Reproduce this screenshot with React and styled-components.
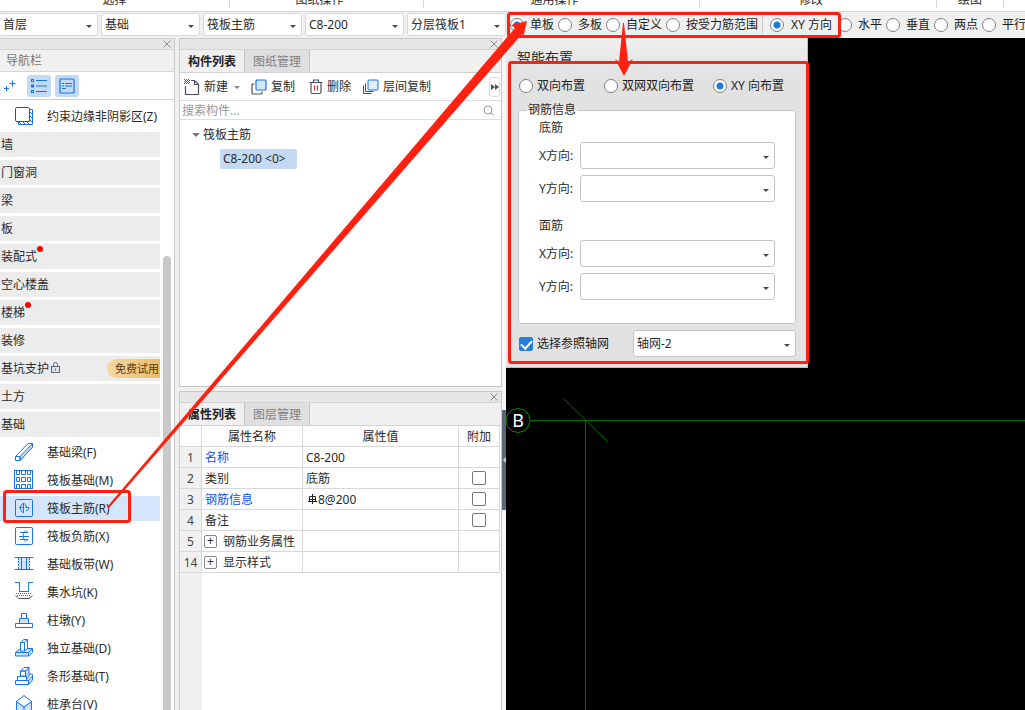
import React from "react";
import styled, { createGlobalStyle } from "styled-components";

const BLUE = "#1a73e8";
const DARK = "#4a5060";

const ribbonGroups = [
  { name: "选择", width: 230, shift: 0 },
  { name: "图纸操作", width: 194, shift: 14 },
  { name: "通用操作", width: 276, shift: 14 },
  { name: "修改", width: 237, shift: 14 },
  { name: "绘图", width: 67, shift: 0 },
];

const combos = ["首层", "基础", "筏板主筋", "C8-200", "分层筏板1"];

const navGroups = [
  { name: "墙" },
  { name: "门窗洞" },
  { name: "梁" },
  { name: "板" },
  { name: "装配式", dot: true },
  { name: "空心楼盖" },
  { name: "楼梯", dot: true },
  { name: "装修" },
  { name: "基坑支护", locked: true },
  { name: "土方" },
  { name: "基础" },
];

const navItems = [
  { name: "基础梁(F)", icon: "beam" },
  { name: "筏板基础(M)", icon: "raft" },
  { name: "筏板主筋(R)", icon: "mainBar", active: true },
  { name: "筏板负筋(X)", icon: "negBar" },
  { name: "基础板带(W)", icon: "strip" },
  { name: "集水坑(K)", icon: "pit" },
  { name: "柱墩(Y)", icon: "pier" },
  { name: "独立基础(D)", icon: "isolated" },
  { name: "条形基础(T)", icon: "linear" },
  { name: "桩承台(V)", icon: "cap" },
];

const properties = [
  { no: 1, name: "名称", value: "C8-200", link: true },
  { no: 2, name: "类别", value: "底筋", check: true },
  { no: 3, name: "钢筋信息", value: "8@200", link: true, check: true, rebar: true },
  { no: 4, name: "备注", value: "", check: true },
  { no: 5, name: "钢筋业务属性", value: "", expand: true },
  { no: 14, name: "显示样式", value: "", expand: true },
];

const shapes = {
  zone: (
    <>
      <path d="M15.500 3.500h3v15h-14v-3h11z" fill="#fff" />
      <path d="M16 6l2 2M16 10l2 2M16 14l2 2M13 16l2 2M9 16l2 2M5 16l2 2" />
      <rect x="1.500" y="1.500" width="14" height="14" rx="1.500" stroke={DARK} fill="#fff" />
    </>
  ),
  beam: (
    <>
      <path d="M1.500 14.500 14 1.500h4.500v3.500L6 18.500H1.500z" fill="#fff" />
      <path d="M6 14.500 18.500 1.500V5L6 18.500z" fill="#cfe2fb" />
      <path d="M1.500 14.500H6v4" />
    </>
  ),
  raft: (
    <>
      <rect x="0.500" y="0.500" width="18" height="18" />
      <path d="M2.500 0.500v4h3v-4M7.500 0.500v4h4v-4M13.500 0.500v4h3v-4" />
      <path d="M2.500 7.500h3v4h-3zM7.500 7.500h4v4h-4zM13.500 7.500h3v4h-3z" />
      <path d="M2.500 18.500v-4h3v4M7.500 18.500v-4h4v4M13.500 18.500v-4h3v4" />
    </>
  ),
  mainBar: (
    <>
      <rect x="1.500" y="1.500" width="17" height="17" rx="1" />
      <path d="M9.500 5v10M9.500 5.500c-1.500 0-3 2-3 4.500s1.500 4.500 3 4.500M9.500 5.500c1.500 0 3 2 3 4M5 9.500h3.500M11.500 9.500H15M15 9.500c0 2-1 3-3 3" />
    </>
  ),
  negBar: (
    <>
      <rect x="1.500" y="1.500" width="17" height="17" rx="1" />
      <path d="M6 6.500h8l-1.500-1.500M5 10.500h10M6 13.500h8l-1.500 1.500M11.500 4.500c-3 3-3 8 0 11" />
    </>
  ),
  strip: (
    <>
      <path d="M4 4h12v12H4z" fill="#cfe2fb" stroke="none" />
      <path d="M0.500 3.500h19M0.500 15.500h19M7.500 3.500v12M12.500 3.500v12" />
      <path d="M4.500 4v12M15.500 4v12" strokeDasharray="2 1" />
    </>
  ),
  pit: (
    <>
      <path d="M1 0.500h4.500v9h9v-9H19" />
      <path d="M2 11.500h16M3 13.500h14" strokeDasharray="1 1" />
      <path d="M1.500 13.500 5 16.500h10l3.500-3" stroke={DARK} />
    </>
  ),
  pier: (
    <>
      <path d="M5.500 8.500h9v5h-9z" fill="#cfe2fb" />
      <path d="M7.500 3.500h5v5h-5zM1.500 13.500h17v4h-17z" fill="#fff" />
    </>
  ),
  isolated: (
    <>
      <path d="m1.500 14.500 5-4h12v4l-4 3.500h-13z" fill="#cfe2fb" />
      <path d="M1.500 14.500h13l4-4M14.500 14.500V18" />
      <path d="M6.500 4.500 10 1.500h3.500v9l-3 2.500h-4z" fill="#fff" />
      <path d="M6.500 4.500h4l3-3M10.500 4.500V13" />
    </>
  ),
  linear: (
    <>
      <path d="m14.500 14.500 4-4.500v4l-4 4.500zM11.500 5l3.500-3.500v9L12 14z" fill="#cfe2fb" />
      <path d="M6.500 5 10 1.500h5L11.500 5zM6.500 5h5v5h-5zM3.500 10.500h9v4h-9zM1.500 14.500h13v4h-13z" fill="#fff" />
      <path d="m15 7.500 3.500 1v2" />
    </>
  ),
  cap: (
    <>
      <path d="M2.500 7.500v9l7.500 3 7.500-3v-9L10 13z" fill="#cfe2fb" />
      <path d="m10 1.500 7.500 6L10 13 2.500 7.500zM10 13v7" fill="#fff" />
    </>
  ),
};

const NavIcon = ({ name }) => (
  <svg width="20" height="21" viewBox="0 0 20 21" fill="none" stroke={BLUE} aria-hidden="true">
    {shapes[name]}
  </svg>
);

const CloseIcon = () => (
  <svg width="8" height="8" viewBox="0 0 8 8" stroke="#8c8c8c" aria-hidden="true">
    <path d="M0.500 0.500l7 7M7.500 0.500l-7 7" />
  </svg>
);

const Radio = ({ name, label, checked }) => (
  <RadioLabel>
    <RadioInput name={name} defaultChecked={checked} />
    <span>{label}</span>
  </RadioLabel>
);

const RebarRow = ({ id, label }) => (
  <FieldRow>
    <label htmlFor={id}>{label}</label>
    <SelectBox tall>
      <select id={id}>
        <option></option>
      </select>
    </SelectBox>
  </FieldRow>
);

const Navigator = () => (
  <Nav>
    <Strip>
      <CloseButton aria-label="关闭"><CloseIcon /></CloseButton>
    </Strip>
    <NavTitle>导航栏</NavTitle>
    <NavTools>
      <ToolToggle aria-label="添加">
        <svg width="14" height="12" viewBox="2 0 14 12" stroke={BLUE} strokeWidth="1.200">
          <path d="M10.500 0.500v6M7.500 3.500h6M4.500 6v5M2 8.500h5" />
        </svg>
      </ToolToggle>
      <ToolToggle active aria-label="列表">
        <svg width="16" height="16" viewBox="0 0 16 16" fill="none" stroke={BLUE}>
          <path d="M5 2.500h11M5 8h11M5 13.500h11" strokeWidth="1.200" />
          <rect x="0.500" y="1.500" width="2" height="2" />
          <rect x="0.500" y="7" width="2" height="2" />
          <rect x="0.500" y="12.500" width="2" height="2" />
        </svg>
      </ToolToggle>
      <ToolToggle active aria-label="详情">
        <svg width="16" height="16" viewBox="0 0 16 16" fill="none" stroke={BLUE} strokeWidth="1.200">
          <rect x="1" y="1" width="14" height="14" rx="1" />
          <path d="M3 5.500h2M6 5.500h7M3 8h2M6 8h7M3 10.500h4" />
        </svg>
      </ToolToggle>
    </NavTools>
    <NavBody>
      <NavList>
        <NavItem>
          <NavIcon name="zone" />
          约束边缘非阴影区(Z)
        </NavItem>
        {navGroups.map((group) => (
          <NavGroup key={group.name}>
            <GroupName dot={group.dot}>{group.name}</GroupName>
            {group.locked && (
              <>
                <svg width="11" height="13" viewBox="0 0 11 13" fill="none" stroke="#5d6673" aria-hidden="true">
                  <rect x="1.500" y="4.500" width="8" height="6" fill="#dfe3e8" />
                  <path d="M3.500 4.500v-2a2 2 0 0 1 4 0v2M5.500 6.500v2" />
                </svg>
                <Trial>免费试用</Trial>
              </>
            )}
          </NavGroup>
        ))}
        {navItems.map((item) => (
          <NavItem key={item.name} active={item.active}>
            <NavIcon name={item.icon} />
            {item.name}
          </NavItem>
        ))}
      </NavList>
      <ScrollTrack>
        <ScrollThumb />
      </ScrollTrack>
    </NavBody>
  </Nav>
);

const ComponentList = () => (
  <ListPanel>
    <Strip>
      <CloseButton aria-label="关闭"><CloseIcon /></CloseButton>
    </Strip>
    <Tabs>
      <Tab active>构件列表</Tab>
      <Tab>图纸管理</Tab>
    </Tabs>
    <Toolbar>
      <ToolButton>
        <svg width="16" height="16" viewBox="0 0 16 16" fill="none" stroke={DARK} strokeWidth="1.200">
          <path d="M1.500 7v8.500h13V5.500l-4-4H7M10.500 1.500v4h4" />
          <path d="M0 0.500h5M1 1.500h5M0 2.500h5M1 3.500h5M0 4.500h5" stroke={BLUE} strokeWidth="1" strokeDasharray="1 1" />
        </svg>
        新建
      </ToolButton>
      <MenuCaret aria-label="新建选项" />
      <ToolButton>
        <svg width="16" height="16" viewBox="0 0 16 16" fill="none" stroke={DARK} strokeWidth="1.200">
          <path d="M3.500 5H2Q1 5 1 6v8q0 1 1 1h8q1 0 1-1v-1.500" />
          <rect x="5" y="1" width="10" height="10" rx="1" stroke={BLUE} fill="#d5e6fc" />
        </svg>
        复制
      </ToolButton>
      <ToolButton>
        <svg width="16" height="16" viewBox="-2 0 16 16" fill="none" stroke={DARK} strokeWidth="1.200">
          <path d="M0.500 3.500h13M4.500 3V1h5v2M2 4v9q0 1.500 1.500 1.500h7q1.500 0 1.500-1.500V4" />
          <path d="M5.500 6.500v5M8.500 6.500v5" stroke="#e03030" />
        </svg>
        删除
      </ToolButton>
      <ToolButton>
        <svg width="16" height="16" viewBox="0 0 16 16" fill="none" stroke={DARK}>
          <path d="M0.500 6.500v8h8M2.500 4.500v8h8" />
          <rect x="5" y="1" width="10" height="10" rx="1" stroke={BLUE} fill="#e3eefd" />
        </svg>
        层间复制
      </ToolButton>
      <MoreButton aria-label="更多">
        <svg width="8" height="6" viewBox="0 0 8 6" fill={DARK}>
          <path d="M0 0l4 3-4 3zM4 0l4 3-4 3z" />
        </svg>
      </MoreButton>
    </Toolbar>
    <Search>
      <input aria-label="搜索构件" placeholder="搜索构件..." />
      <svg width="11" height="11" viewBox="0 0 11 11" fill="none" stroke="#999" aria-hidden="true">
        <circle cx="5" cy="5" r="4" />
        <path d="M8 8l2.500 2.500" />
      </svg>
    </Search>
    <Tree>
      <TreeNode>筏板主筋</TreeNode>
      <TreeLeaf>C8-200 &lt;0&gt;</TreeLeaf>
    </Tree>
  </ListPanel>
);

const PropertyList = () => (
  <PropertyPanel>
    <Strip>
      <CloseButton aria-label="关闭"><CloseIcon /></CloseButton>
    </Strip>
    <Tabs>
      <Tab active>属性列表</Tab>
      <Tab>图层管理</Tab>
    </Tabs>
    <PropertyTable>
      <colgroup>
        <col className="no" />
        <col className="name" />
        <col />
        <col className="extra" />
      </colgroup>
      <thead>
        <tr>
          <th></th>
          <th>属性名称</th>
          <th>属性值</th>
          <th>附加</th>
        </tr>
      </thead>
      <tbody>
        {properties.map((row) => (
          <tr key={row.no}>
            <NumberCell>{row.no}</NumberCell>
            <NameCell link={row.link}>
              {row.expand && <Expand aria-label={`展开${row.name}`}>+</Expand>}
              {row.name}
            </NameCell>
            <td>
              {row.rebar && (
                <RebarMark viewBox="0 0 12 10" aria-hidden="true">
                  <path d="M6.500 0v10M2 7.500h9M3.500 2.500h6v3h-6zM3.500 5v2.500M9.500 5v2.500" />
                </RebarMark>
              )}
              {row.value}
            </td>
            <CheckCell>{row.check && <CheckInput aria-label={`附加${row.name}`} />}</CheckCell>
          </tr>
        ))}
      </tbody>
    </PropertyTable>
    <TableRest>
      <Gutter />
    </TableRest>
  </PropertyPanel>
);

const LayoutDialog = () => (
  <Dialog>
    <DialogTitle>智能布置</DialogTitle>
    <DialogBody>
      <RadioRow>
        <Radio name="layout" label="双向布置" />
        <Radio name="layout" label="双网双向布置" />
        <Radio name="layout" label="XY 向布置" checked />
      </RadioRow>
      <RebarSet>
        <legend>钢筋信息</legend>
        <Layer>
          <h4>底筋</h4>
          <RebarRow id="bottom-x" label="X方向:" />
          <RebarRow id="bottom-y" label="Y方向:" />
        </Layer>
        <Layer>
          <h4>面筋</h4>
          <RebarRow id="top-x" label="X方向:" />
          <RebarRow id="top-y" label="Y方向:" />
        </Layer>
      </RebarSet>
      <AxisRow>
        <RadioLabel>
          <CheckInput filled defaultChecked />
          <span>选择参照轴网</span>
        </RadioLabel>
        <AxisSelect tall>
          <select aria-label="轴网">
            <option>轴网-2</option>
          </select>
        </AxisSelect>
      </AxisRow>
    </DialogBody>
  </Dialog>
);

const App = () => (
  <Page>
    <GlobalStyle />
    <Ribbon>
      {ribbonGroups.map((group) => (
        <RibbonGroup key={group.name} $width={group.width} $shift={group.shift}>
          {group.name}
        </RibbonGroup>
      ))}
    </Ribbon>
    <OptionBar>
      <ComboRow>
        {combos.map((text) => (
          <Combo key={text}>
            <select aria-label={text}>
              <option>{text}</option>
            </select>
          </Combo>
        ))}
      </ComboRow>
      <OptionRadios>
        <Radio name="range" label="单板" checked />
        <Radio name="range" label="多板" />
        <Radio name="range" label="自定义" />
        <Radio name="range" label="按受力筋范围" />
      </OptionRadios>
      <Separator />
      <DirectionMode>
        <Radio name="direction" label="XY 方向" checked />
      </DirectionMode>
      <OptionRadios>
        <Radio name="direction" label="水平" />
        <Radio name="direction" label="垂直" />
        <Radio name="direction" label="两点" />
        <Radio name="direction" label="平行" />
      </OptionRadios>
    </OptionBar>
    <Workspace>
      <Navigator />
      <Middle>
        <ComponentList />
        <PropertyList />
      </Middle>
      <Splitter>
        <SplitHandle aria-label="收起面板" />
      </Splitter>
      <Canvas>
        <Drawing aria-hidden="true">
          <g stroke="#006e00" fill="none">
            <path d="M24 382.500h3000M79.500 382.500v2000M57.500 360.500l44 43" />
            <path stroke="#008a00" d="M12 370.500l6 1.500 4.500 4.500 1.500 6-1.500 6-4.500 4.500-6 1.500-6-1.500-4.500-4.500-1.500-6 1.500-6 4.500-4.500z" />
          </g>
          <text x="12" y="389" textAnchor="middle" fill="#fff" fontSize="18">B</text>
        </Drawing>
        <LayoutDialog />
      </Canvas>
    </Workspace>
    <Markup aria-hidden="true">
      <g fill="none" stroke="#ff2010" strokeWidth="3">
        <rect x="508.500" y="13.500" width="331" height="23" rx="2" />
        <rect x="509.500" y="62.500" width="298" height="300" rx="2" />
        <rect x="4.500" y="491.500" width="125" height="30" rx="2" />
      </g>
      <g fill="#ff2010">
        <path d="M527 21l-16 4 4 3L107 507l2 1L522 34l1 4z" />
        <path d="M623 23l-4 39-4-3 9 17 9-17-5 3-4-39z" />
      </g>
    </Markup>
  </Page>
);

export default App;

const GlobalStyle = createGlobalStyle`
  * {
    box-sizing: border-box;
  }

  body {
    margin: 0;
    overflow: hidden;
  }

  body, button, input, select {
    font-family: "Noto Sans", "Noto Sans CJK SC", sans-serif;
    font-size: 12px;
    line-height: 16px;
    color: #2b2b2b;
  }

  button {
    padding: 0;
    border: 0;
    background: none;
  }
`;

const Page = styled.div`
  position: relative;
  display: flex;
  flex-direction: column;
  height: 100vh;
  overflow: hidden;
  background: #f0f0f0;
`;

const Ribbon = styled.div`
  display: flex;
  flex: none;
  height: 12px;
  overflow: hidden;
  background: #fff;
  border-bottom: 1px solid #d6d6d6;
`;

const RibbonGroup = styled.div`
  display: flex;
  flex: none;
  align-items: flex-end;
  justify-content: center;
  width: ${(props) => props.$width}px;
  height: 8px;
  padding-right: ${(props) => props.$shift}px;
  border-right: 1px solid #d6d6d6;
`;

const OptionBar = styled.div`
  display: flex;
  flex: none;
  align-items: center;
  height: 26px;
  margin-left: -1px;
  padding-bottom: 1px;
  overflow: hidden;
  white-space: nowrap;
`;

const ComboRow = styled.div`
  display: flex;
  gap: 3px;
`;

const SelectBox = styled.div.withConfig({ shouldForwardProp: (prop) => prop !== "tall" })`
  position: relative;

  select {
    display: block;
    width: 100%;
    height: ${(props) => (props.tall ? 27 : 23)}px;
    padding: 0 3px;
    appearance: none;
    background: #fff;
    border: 1px solid ${(props) => (props.tall ? "#c4c4c4" : "#d8d8d8")};
    border-radius: 3px;
  }

  &::after {
    content: "";
    position: absolute;
    top: 50%;
    right: 6px;
    border: 3px solid transparent;
    border-top-color: #444b58;
    border-bottom: 0;
    pointer-events: none;
  }
`;

const Combo = styled(SelectBox)`
  width: 99px;
`;

const RadioLabel = styled.label`
  display: flex;
  flex: none;
  align-items: center;
  gap: 4px;
  color: #1c1c1c;
`;

const RadioInput = styled.input.attrs({ type: "radio" })`
  width: 14px;
  height: 14px;
  margin: 0;
  appearance: none;
  background: #fff;
  border: 1px solid #808080;
  border-radius: 50%;

  &:checked {
    background: radial-gradient(circle, #1f78e0 3px, #fff 4px);
  }
`;

const OptionRadios = styled.div`
  display: flex;
  flex: none;
  gap: 4px;
  padding: 1px 0 0 4px;

  label {
    gap: 6px;
  }
`;

const DirectionMode = styled(OptionRadios)`
  width: 68px;

  label {
    gap: 7px;
  }
`;

const Separator = styled.div`
  flex: none;
  width: 1px;
  height: 18px;
  margin: 0 3px 0 4px;
  background: #c8c8c8;
`;

const Workspace = styled.div`
  display: flex;
  flex: 1;
  min-height: 0;
`;

const Nav = styled.nav`
  display: flex;
  flex: none;
  flex-direction: column;
  width: 175px;
  margin-right: 4px;
  background: #fff;
  border-top: 1px solid #d0d0d0;
  border-right: 1px solid #c8c8c8;
`;

const Strip = styled.div`
  display: flex;
  flex: none;
  align-items: center;
  justify-content: flex-end;
  height: 11px;
  padding-right: 3px;
  background: #e7e7e7;
  border-bottom: 1px solid #d2d2d2;
`;

const CloseButton = styled.button`
  display: flex;
`;

const NavTitle = styled.div`
  flex: none;
  height: 22px;
  padding-left: 6px;
  line-height: 21px;
  color: #777;
  background: #f0f0f0;
  border-bottom: 1px solid #d6d6d6;
`;

const NavTools = styled.div`
  display: flex;
  flex: none;
  align-items: center;
  gap: 4px;
  height: 28px;
  margin-left: -1px;
  border-bottom: 1px solid #d2d2d2;
`;

const ToolToggle = styled.button.withConfig({ shouldForwardProp: (prop) => prop !== "active" })`
  display: grid;
  place-items: center;
  width: 24px;
  height: 22px;
  border-radius: 3px;
  background: ${(props) => (props.active ? "#c2daf3" : "none")};
`;

const NavBody = styled.div`
  display: flex;
  flex: 1;
  min-height: 0;
`;

const NavList = styled.div`
  display: flex;
  flex-direction: column;
  gap: 3px;
  width: 160px;
  padding-top: 4px;
  overflow: hidden;
`;

const NavItem = styled.div.withConfig({ shouldForwardProp: (prop) => prop !== "active" })`
  display: flex;
  flex: none;
  align-items: center;
  gap: 13px;
  height: 25px;
  padding-left: 14px;
  white-space: nowrap;
  background: ${(props) => (props.active ? "#d3e6fd" : "#fff")};
`;

const NavGroup = styled.div`
  display: flex;
  flex: none;
  align-items: center;
  gap: 1px;
  height: 25px;
  padding-left: 1px;
  background: #ececec;
`;

const GroupName = styled.span.withConfig({ shouldForwardProp: (prop) => prop !== "dot" })`
  position: relative;

  &::after {
    content: "";
    display: ${(props) => (props.dot ? "block" : "none")};
    position: absolute;
    top: -3px;
    left: 100%;
    width: 6px;
    height: 6px;
    border-radius: 50%;
    background: #f00;
  }
`;

const Trial = styled.span`
  margin-left: auto;
  padding: 0 1px 0 8px;
  font-size: 11px;
  line-height: 19px;
  color: #5f3510;
  background: linear-gradient(90deg, #f5d7a3, #e9bd66);
  border-radius: 10px 0 0 10px;
`;

const ScrollTrack = styled.div`
  display: flex;
  flex-direction: column;
  width: 8px;
  margin-left: 3px;
  padding-top: 156px;
`;

const ScrollThumb = styled.div`
  flex: 1;
  border-radius: 4px 4px 0 0;
  background: #c9c9c9;
`;

const Middle = styled.div`
  display: flex;
  flex: none;
  flex-direction: column;
  gap: 4px;
  width: 323px;
`;

const Panel = styled.section`
  display: flex;
  flex-direction: column;
  background: #fff;
  border: 1px solid #c8c8c8;
`;

const ListPanel = styled(Panel)`
  flex: none;
  height: 349px;
`;

const PropertyPanel = styled(Panel)`
  flex: 1;
  min-height: 0;
  border-bottom: 0;
`;

const Tabs = styled.div`
  display: flex;
  flex: none;
  height: 23px;
  background: #f0f0f0;
  border-bottom: 1px solid #d2d2d2;
`;

const Tab = styled.button.withConfig({ shouldForwardProp: (prop) => prop !== "active" })`
  padding: 2px 8px 0;
  font-weight: ${(props) => (props.active ? "bold" : "normal")};
  color: ${(props) => (props.active ? "#222" : "#808080")};
  background: ${(props) => (props.active ? "#f0f0f0" : "#dfdfdf")};
  border-right: 1px solid #c2c2c6;
`;

const Toolbar = styled.div`
  display: flex;
  flex: none;
  align-items: center;
  height: 28px;
  padding: 1px 1px 0 4px;
  border-bottom: 1px solid #dedede;
`;

const ToolButton = styled.button`
  display: flex;
  align-items: center;
  gap: 4px;
  margin-right: 12px;
`;

const MenuCaret = styled.button`
  margin: 0 11px 0 -6px;
  border: 3px solid transparent;
  border-top-color: #888;
  border-bottom: 0;
`;

const MoreButton = styled.button`
  display: grid;
  place-items: center;
  width: 11px;
  height: 20px;
  margin-left: auto;
  border: 1px solid #ddd;
  border-radius: 3px;
`;

const Search = styled.div`
  display: flex;
  flex: none;
  align-items: center;
  height: 19px;
  padding: 1px 7px 0 2px;
  border-bottom: 1px solid #dedede;

  input {
    flex: 1;
    min-width: 0;
    padding: 0;
    border: 0;
    outline: 0;
    background: none;
  }

  input::placeholder {
    color: #999;
  }
`;

const Tree = styled.div`
  padding: 7px 12px;
`;

const TreeNode = styled.div`
  display: flex;
  align-items: center;
  gap: 3px;

  &::before {
    content: "";
    border: 4px solid transparent;
    border-top-color: #777;
    border-bottom: 0;
  }
`;

const TreeLeaf = styled.div`
  width: fit-content;
  min-width: 77px;
  margin: 6px 0 0 28px;
  padding: 0 3px;
  line-height: 20px;
  background: #c2daf3;
  border-radius: 2px;
`;

const PropertyTable = styled.table`
  flex: none;
  width: calc(100% - 1px);
  table-layout: fixed;
  border-spacing: 0;

  .no {
    width: 22px;
  }

  .name {
    width: 101px;
  }

  .extra {
    width: 41px;
  }

  th,
  td {
    height: 21px;
    padding: 2px 3px 0;
    font-weight: normal;
    white-space: nowrap;
    border-right: 1px solid #d8d8d8;
    border-bottom: 1px solid #d8d8d8;
  }
`;

const NumberCell = styled.td`
  && {
    padding: 2px 0 0;
    text-align: center;
    color: #444;
    background: #f0f0f0;
  }
`;

const NameCell = styled.td.withConfig({ shouldForwardProp: (prop) => prop !== "link" })`
  color: ${(props) => (props.link ? "#0f52f0" : "#2b2b2b")};
`;

const RebarMark = styled.svg`
  width: 12px;
  height: 10px;
  fill: none;
  stroke: #222;
`;

const CheckCell = styled.td`
  && {
    padding: 0;
    text-align: center;
    line-height: 0;
  }
`;

const CheckInput = styled.input.attrs({ type: "checkbox" }).withConfig({
  shouldForwardProp: (prop) => prop !== "filled",
})`
  width: 14px;
  height: 14px;
  margin: 0;
  vertical-align: top;
  appearance: none;
  border: 1px solid ${(props) => (props.filled ? "#2580e0" : "#777")};
  border-radius: 2px;
  background: #fff;

  &:checked {
    display: flex;
    justify-content: center;
    align-items: flex-start;
    background: #2580e0;
  }

  &:checked::after {
    content: "";
    width: 5px;
    height: 9px;
    border: solid #fff;
    border-width: 0 2px 2px 0;
    transform: rotate(42deg);
  }
`;

const Expand = styled.button`
  width: 13px;
  height: 13px;
  margin: 0 6px 0 -1px;
  line-height: 10px;
  vertical-align: 1px;
  border: 1px solid #888;
  border-radius: 2px;
`;

const TableRest = styled.div`
  display: flex;
  flex: 1;
`;

const Gutter = styled.div`
  width: 22px;
  background: #f0f0f0;
`;

const Splitter = styled.div`
  flex: none;
  width: 4px;
  padding-top: 372px;
  background: #f7f7f7;
`;

const SplitHandle = styled.button`
  display: grid;
  place-items: center;
  width: 4px;
  height: 100px;
  background: #5d6673;

  &::after {
    content: "";
    border: 3px solid transparent;
    border-right-color: #c8ccd2;
    border-left: 0;
  }
`;

const Canvas = styled.main`
  position: relative;
  flex: 1;
  min-width: 0;
  background: #000;
`;

const Drawing = styled.svg`
  position: absolute;
  inset: 0;
  width: 100%;
  height: 100%;
`;

const Dialog = styled.div`
  position: absolute;
  top: 0;
  left: 0;
  width: 302px;
  background: linear-gradient(#efefef, #e2e2e2 40px);
  border: solid #bdbdbd;
  border-width: 0 1px 1px 0;
`;

const DialogTitle = styled.div`
  height: 24px;
  padding: 10px 0 0 11px;
  overflow: hidden;
  font-size: 14px;
  line-height: 20px;
`;

const DialogBody = styled.div`
  padding: 16px 11px 10px 12px;
`;

const RadioRow = styled.div`
  display: flex;
  gap: 19px;
  padding: 0 1px 8px;
  white-space: nowrap;
`;

const RebarSet = styled.fieldset`
  margin: 0 0 6px;
  padding: 0 20px 23px;
  background: #fff;
  border: 1px solid #c6c6c6;
  border-radius: 3px;

  legend {
    height: 16px;
    margin-left: -12px;
    padding: 0 1px;
  }
`;

const Layer = styled.div`
  display: grid;
  gap: 6px;

  & + & {
    margin-top: 14px;
  }

  h4 {
    margin: 0;
    padding-top: 2px;
    font-size: 12px;
    font-weight: normal;
    line-height: 16px;
  }
`;

const FieldRow = styled.div`
  display: grid;
  grid-template-columns: 41px 1fr;
  align-items: center;
`;

const AxisRow = styled.div`
  display: flex;
  align-items: center;
  justify-content: space-between;
  padding-left: 1px;
`;

const AxisSelect = styled(SelectBox)`
  width: 163px;
`;

const Markup = styled.svg`
  position: absolute;
  inset: 0;
  width: 100%;
  height: 100%;
  pointer-events: none;
`;
